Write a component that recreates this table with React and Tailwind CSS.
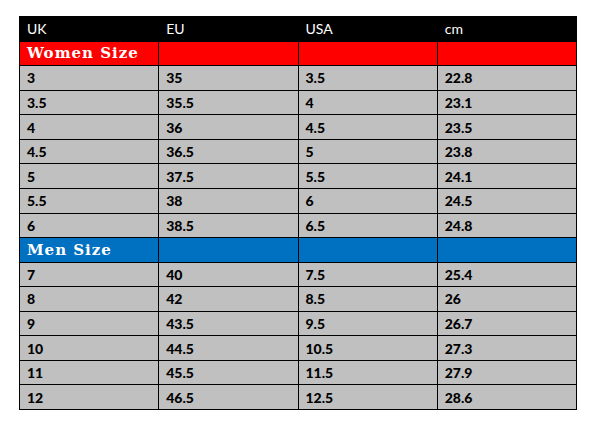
import React from "react";

const women = [
  ["3", "35", "3.5", "22.8"],
  ["3.5", "35.5", "4", "23.1"],
  ["4", "36", "4.5", "23.5"],
  ["4.5", "36.5", "5", "23.8"],
  ["5", "37.5", "5.5", "24.1"],
  ["5.5", "38", "6", "24.5"],
  ["6", "38.5", "6.5", "24.8"],
];
const men = [
  ["7", "40", "7.5", "25.4"],
  ["8", "42", "8.5", "26"],
  ["9", "43.5", "9.5", "26.7"],
  ["10", "44.5", "10.5", "27.3"],
  ["11", "45.5", "11.5", "27.9"],
  ["12", "46.5", "12.5", "28.6"],
];

function DataRow({ row }) {
  return row.map((v, i) => (
    <div key={i} className="bg-[#c0c0c0] flex items-center pl-[7px] text-[14px] font-black text-black">
      {v}
    </div>
  ));
}

function SectionRow({ label, color }) {
  return (
    <>
      <div className={`${color} flex items-center pl-[7px] text-white text-[15px] font-black tracking-[1px]`} style={{ fontFamily: '"DejaVu Serif", serif' }}>
        {label}
      </div>
      <div className={color} />
      <div className={color} />
      <div className={color} />
    </>
  );
}

export default function App() {
  return (
    <div className="w-[605px] h-[429px] bg-white pt-[16px] pl-[19px]" style={{ fontFamily: 'Lato, "Liberation Sans", sans-serif' }}>
      <div className="w-[558px] h-[394px] bg-black border border-black grid grid-cols-4 grid-rows-[repeat(16,minmax(0,1fr))] gap-px">
        {["UK", "EU", "USA", "cm"].map((h) => (
          <div key={h} className="bg-black flex items-center pl-[7px] text-white text-[14px]">
            {h}
          </div>
        ))}
        <SectionRow label="Women Size" color="bg-[#ff0000]" />
        {women.map((r, i) => (
          <DataRow key={"w" + i} row={r} />
        ))}
        <SectionRow label="Men Size" color="bg-[#0070c0]" />
        {men.map((r, i) => (
          <DataRow key={"m" + i} row={r} />
        ))}
      </div>
    </div>
  );
}
